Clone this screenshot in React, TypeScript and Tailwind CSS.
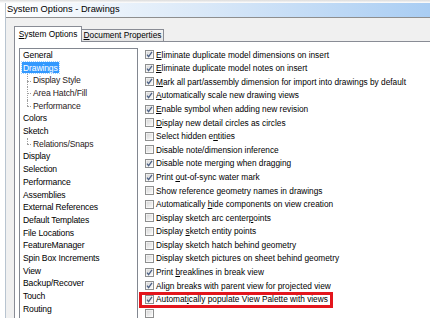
const options: [string, boolean][] = [
  ['&Eliminate duplicate model dimensions on insert', true],
  ['&Eliminate duplicate model notes on insert', true],
  ['&Mark all part/assembly dimension for import into drawings by default', true],
  ['&Automatically scale new drawing views', true],
  ['&Enable symbol when adding new revision', true],
  ['&Display new detail circles as circles', false],
  ['Select hidden e&ntities', false],
  ['Disable note/dimension inference', false],
  ['Disable note merging when dragging', true],
  ['Print &out-of-sync water mark', true],
  ['Show reference &geometry names in drawings', false],
  ['Automatically &hide components on view creation', false],
  ['Display sketch arc center&points', false],
  ['Display &sketch entity points', false],
  ['Display sketch hatch behind geometry', false],
  ['Display sketch pictures on sheet behind geometry', false],
  ['Print &breaklines in break view', true],
  ['Align breaks with parent view for projected view', true],
  ['Automat&ically populate View Palette with views', true],
]

// level 0 = top item, 1 = child, 2 = last child
const tree: [string, number][] = [
  ['General', 0],
  ['Drawings', 0],
  ['Display Style', 1],
  ['Area Hatch/Fill', 1],
  ['Performance', 2],
  ['Colors', 0],
  ['Sketch', 0],
  ['Relations/Snaps', 2],
  ['Display', 0],
  ['Selection', 0],
  ['Performance', 0],
  ['Assemblies', 0],
  ['External References', 0],
  ['Default Templates', 0],
  ['File Locations', 0],
  ['FeatureManager', 0],
  ['Spin Box Increments', 0],
  ['View', 0],
  ['Backup/Recover', 0],
  ['Touch', 0],
  ['Routing', 0],
]

function Label({ text }: { text: string }) {
  const i = text.indexOf('&')
  if (i < 0) return <>{text}</>
  return (
    <>
      {text.slice(0, i)}
      <span className="underline underline-offset-[1px]">{text[i + 1]}</span>
      {text.slice(i + 2)}
    </>
  )
}

function CheckBox({ checked }: { checked: boolean }) {
  return (
    <svg width="9" height="9" viewBox="0 0 9 9" className="shrink-0">
      <defs>
        <linearGradient id="cbg" x1="0" y1="0" x2="1" y2="1">
          <stop offset="0" stopColor="#d6d6d6" />
          <stop offset="1" stopColor="#fafafa" />
        </linearGradient>
      </defs>
      <rect x="0.5" y="0.5" width="8" height="8" fill="#fff" stroke="#8e8f8f" />
      <rect x="1.5" y="1.5" width="6" height="6" fill="url(#cbg)" />
      {checked && <path d="M2 4.6 L3.6 6.6 L7 1.8" fill="none" stroke="#4d6185" strokeWidth="1.3" />}
    </svg>
  )
}

export default function App() {
  return (
    <div className="w-[430px] h-[318px] overflow-hidden bg-white text-black relative" style={{ fontFamily: '"Liberation Sans", Arial, sans-serif' }}>
      <div className="h-[3px] bg-gradient-to-b from-[#dcdcdc] to-white" />
      <div className="ml-[5px] border-l border-[#b8c4d0] h-[315px] flex flex-col">
        <div className="h-[19px] flex items-center pl-[1px] text-[9.3px] bg-gradient-to-r from-white via-[#dbe9f8] via-45% to-[#a9cdf3] border-b border-[#8e8e8e]">
          System Options - Drawings
        </div>
        <div className="flex-1 bg-[#f0f0f0] pl-[8px] pt-[7px] flex flex-col">
          <div className="flex items-end h-[16px] text-[8.3px] whitespace-nowrap">
            <div className="h-[16px] w-[68px] bg-white border border-b-0 border-[#898c95] flex items-center justify-center relative top-[1px] z-10">
              <Label text="&System Options" />
            </div>
            <div className="h-[12px] w-[82px] bg-gradient-to-b from-[#f4f4f4] to-[#e4e4e4] border border-l-0 border-b-0 border-[#898c95] flex items-center justify-center">
              <Label text="&Document Properties" />
            </div>
          </div>
          <div className="flex-1 bg-white border-l border-t border-[#898c95] flex pl-[4px] pt-[6px] leading-none">
            <div className="w-[119px] h-[300px] border border-[#828790] pl-[2px] shrink-0 text-[8.6px] tracking-[-0.15px]">
              {tree.map(([name, level], idx) =>
                level === 0 ? (
                  <div key={idx} className="h-[12.7px] flex items-center">
                    <span className={idx === 1 ? 'bg-[#3399ff] text-white px-[1px] h-[11px] flex items-center outline outline-1 outline-dotted outline-[#9fcfff]' : 'px-[1px]'}>{name}</span>
                  </div>
                ) : (
                  <div key={idx} className="h-[12.7px] flex items-center">
                    <div className="relative w-[6px] h-full ml-[5px] shrink-0">
                      <span className={'absolute left-0 top-0 border-l border-dotted border-[#a0a0a0] ' + (level === 2 ? 'h-1/2' : 'h-full')} />
                      <span className="absolute left-0 top-1/2 w-[4px] border-t border-dotted border-[#a0a0a0]" />
                    </div>
                    <span className="text-[#2a1a1a]">{name}</span>
                  </div>
                )
              )}
            </div>
            <div className="pl-[7px] flex flex-col text-[8.3px]">
              {options.map(([label, checked], idx) => (
                <div key={idx} className="h-[13.6px] flex items-center gap-[2px] relative whitespace-nowrap">
                  <CheckBox checked={checked} />
                  <span><Label text={label} /></span>
                  {idx === options.length - 1 && (
                    <span className="absolute -left-[6px] w-[194px] -top-[1px] -bottom-[2px] border-[3px] border-[#e3161d]" />
                  )}
                </div>
              ))}
              <div className="h-[13.6px] flex items-start pt-[3px]">
                <CheckBox checked={false} />
              </div>
            </div>
          </div>
        </div>
      </div>
    </div>
  )
}
